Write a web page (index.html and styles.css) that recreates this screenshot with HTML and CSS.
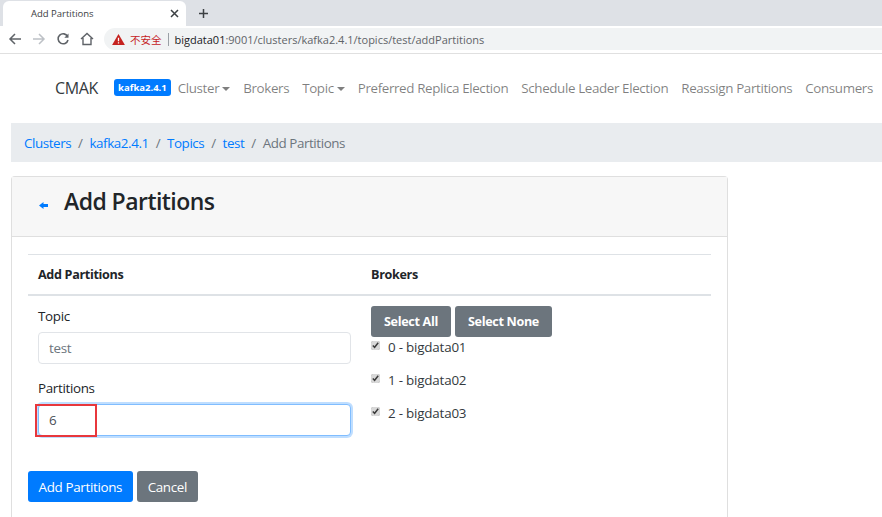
FILE: index.html
```html
<!DOCTYPE html>
<html lang="en">
<head>
    <meta charset="UTF-8">
    <meta name="viewport" content="width=device-width, initial-scale=1.0">
    <title>Add Partitions</title>
    <link rel="stylesheet" href="styles.css">
</head>
<body>
    <div class="tabstrip">
        <div class="tab">
            <span class="tab-title">Add Partitions</span>
            <svg class="tab-close" width="9" height="9" viewBox="0 0 9 9"><path d="M1 1l7 7M8 1l-7 7" stroke="#3c4043" stroke-width="1.5"/></svg>
        </div>
        <svg class="tab-new" width="11" height="11" viewBox="0 0 11 11"><path d="M5.5 1v9M1 5.5h9" stroke="#3c4043" stroke-width="1.5"/></svg>
    </div>
    <div class="toolbar">
        <svg class="tool" width="14" height="14" viewBox="0 0 14 14"><path d="M13 7H2M7 2L2 7l5 5" fill="none" stroke="#5f6368" stroke-width="1.5"/></svg>
        <svg class="tool" width="14" height="14" viewBox="0 0 14 14"><path d="M1 7h11M7 2l5 5-5 5" fill="none" stroke="#bdc1c6" stroke-width="1.5"/></svg>
        <svg class="tool" width="14" height="14" viewBox="0 0 14 14"><path d="M11.6 4.5A5 5 0 1 0 12 8" fill="none" stroke="#5f6368" stroke-width="1.6"/><path d="M12.5 1.5v4.2H8.3z" fill="#5f6368"/></svg>
        <svg class="tool" width="14" height="14" viewBox="0 0 14 14"><path d="M1 7l6-5.5L13 7M3 6v6.5h8V6" fill="none" stroke="#5f6368" stroke-width="1.4"/></svg>
        <div class="omnibox">
            <svg width="13" height="11" viewBox="0 0 14 12"><path d="M7 0l7 12H0z" fill="#c5221f"/><path d="M6.3 4h1.4v4H6.3zM6.3 9h1.4v1.4H6.3z" fill="#fff"/></svg>
            <span class="insecure">不安全</span>
            <span class="omni-sep"></span>
            <span class="url"><b>bigdata01</b>:9001/clusters/kafka2.4.1/topics/test/addPartitions</span>
        </div>
    </div>

    <nav class="navbar">
        <a class="brand">CMAK</a>
        <span class="badge">kafka2.4.1</span>
        <a class="nav-link caret">Cluster</a>
        <a class="nav-link">Brokers</a>
        <a class="nav-link caret">Topic</a>
        <a class="nav-link">Preferred Replica Election</a>
        <a class="nav-link">Schedule Leader Election</a>
        <a class="nav-link">Reassign Partitions</a>
        <a class="nav-link">Consumers</a>
    </nav>

    <ol class="breadcrumb">
        <li><a>Clusters</a></li>
        <li><a>kafka2.4.1</a></li>
        <li><a>Topics</a></li>
        <li><a>test</a></li>
        <li class="active">Add Partitions</li>
    </ol>

    <div class="card">
        <div class="card-header">
            <svg class="back" width="9" height="7" viewBox="0 0 9 7"><path d="M0 3.5L4.5 0v2H9v3H4.5v2z" fill="#007bff"/></svg>
            <h3>Add Partitions</h3>
        </div>
        <div class="card-body">
            <div class="grid">
                <div class="th">Add Partitions</div>
                <div class="th">Brokers</div>
                <div class="cell">
                    <label class="field-label">Topic</label>
                    <input class="form-control readonly" type="text" value="test" readonly>
                    <label class="field-label">Partitions</label>
                    <div class="marked">
                        <input class="form-control focused" type="text" value="6">
                        <span class="red-box"></span>
                    </div>
                </div>
                <div class="cell">
                    <div class="select-btns">
                        <button class="btn btn-gray strong">Select All</button>
                        <button class="btn btn-gray strong">Select None</button>
                    </div>
                    <label class="check first"><input type="checkbox" checked> 0 - bigdata01</label>
                    <label class="check"><input type="checkbox" checked> 1 - bigdata02</label>
                    <label class="check"><input type="checkbox" checked> 2 - bigdata03</label>
                </div>
            </div>
            <div class="actions">
                <button class="btn btn-blue">Add Partitions</button>
                <button class="btn btn-gray">Cancel</button>
            </div>
        </div>
    </div>
</body>
</html>
```

FILE: styles.css
```css
* {
    box-sizing: border-box;
}
html, body {
    height: 517px;
    overflow: hidden;
}
body {
    margin: 0;
    font-family: "Open Sans", "Noto Sans", Arial, sans-serif;
    font-size: 13.4px;
    letter-spacing: -0.33px;
    color: #212529;
    background: #fff;
}

/* browser chrome */
.tabstrip {
    height: 26px;
    background: #dee1e6;
    display: flex;
    align-items: center;
    padding-left: 3px;
}
.tab {
    width: 183px;
    height: 25px;
    margin-top: 1px;
    background: #fff;
    border-radius: 6px 6px 0 0;
    display: flex;
    align-items: center;
    justify-content: space-between;
    padding: 0 7px 0 28px;
}
.tab-title {
    font-size: 9.5px;
    letter-spacing: 0;
    color: #3c4043;
}
.tab-new {
    margin-left: 12px;
}
.toolbar {
    height: 28px;
    display: flex;
    align-items: center;
    padding: 0 0 1px 8px;
    gap: 10px;
    border-bottom: 1px solid #e0e0e0;
}
.omnibox {
    flex: 1;
    height: 22px;
    background: #f1f3f4;
    border-radius: 11px 0 0 11px;
    display: flex;
    align-items: center;
    padding-left: 8px;
}
.insecure {
    font-family: "Noto Sans CJK SC", sans-serif;
    font-size: 10.5px;
    letter-spacing: 0;
    color: #c5221f;
    margin-left: 5px;
}
.omni-sep {
    width: 1px;
    height: 13px;
    background: #9aa0a6;
    margin: 0 6px;
}
.url {
    font-size: 11px;
    letter-spacing: 0;
    color: #5f6368;
}
.url b {
    font-weight: 400;
    color: #202124;
}

/* navbar */
.navbar {
    height: 69px;
    display: flex;
    align-items: center;
    padding: 0 0 2px 55px;
    white-space: nowrap;
}
.brand {
    font-size: 16px;
    color: #343a40;
    margin-right: 16px;
}
.badge {
    background: #007bff;
    color: #fff;
    font-size: 9.5px;
    font-weight: 700;
    letter-spacing: 0;
    padding: 2px 4px;
    border-radius: 3px;
    margin-right: 7px;
}
.nav-link {
    color: rgba(0, 0, 0, 0.5);
    letter-spacing: -0.38px;
    margin-right: 13px;
}
.caret::after {
    content: "";
    display: inline-block;
    margin-left: 3px;
    vertical-align: 2px;
    border-top: 4px solid;
    border-left: 4px solid transparent;
    border-right: 4px solid transparent;
}

/* breadcrumb */
.breadcrumb {
    list-style: none;
    height: 39px;
    margin: 0 0 14px 11px;
    padding: 0 0 0 13px;
    background: #e9ecef;
    display: flex;
    align-items: center;
    letter-spacing: -0.42px;
}
.breadcrumb a {
    color: #007bff;
}
.breadcrumb li + li::before {
    content: "/";
    color: #6c757d;
    padding: 0 6.9px;
}
.breadcrumb .active {
    color: #6c757d;
}

/* card */
.card {
    width: 717px;
    height: 341px;
    margin-left: 11px;
    border: 1px solid #dfdfdf;
    border-bottom: 0;
    border-radius: 4px 4px 0 0;
}
.card-header {
    height: 60px;
    background: #f7f7f7;
    border-bottom: 1px solid #dfdfdf;
    display: flex;
    align-items: flex-start;
    padding: 9px 0 0 27px;
}
.back {
    margin: 16px 16px 0 0;
}
.card-header h3 {
    margin: 0;
    font-size: 23px;
    font-weight: 600;
    letter-spacing: -0.55px;
    line-height: 30px;
}
.card-body {
    padding: 17px 16px 0;
}
.grid {
    display: grid;
    grid-template-columns: 333px 1fr;
}
.th {
    height: 42px;
    border-top: 1px solid #dee2e6;
    border-bottom: 2px solid #dee2e6;
    padding: 11px 10px 0;
    font-weight: 700;
    font-size: 12.6px;
}
.cell {
    padding: 10px 10px 0;
}
.field-label {
    display: block;
    height: 20px;
    line-height: 20px;
    margin-bottom: 6px;
}
.form-control {
    display: block;
    width: 313px;
    height: 32px;
    margin-bottom: 14px;
    padding: 0 10px;
    font: inherit;
    letter-spacing: inherit;
    color: #495057;
    border: 1px solid #ced4da;
    border-radius: 4px;
    outline: none;
}
.readonly {
    color: #6c757d;
    border-color: #e1e4e8;
}
.focused {
    border-color: #80bdff;
    box-shadow: 0 0 0 2px rgba(0, 123, 255, 0.25);
}
.marked {
    position: relative;
}
.red-box {
    position: absolute;
    left: -3px;
    top: 0;
    width: 62px;
    height: 33px;
    border: 2px solid #e8373c;
}
.btn {
    height: 31px;
    padding: 0 10px;
    font: inherit;
    letter-spacing: inherit;
    color: #fff;
    border: 1px solid transparent;
    border-radius: 3px;
}
.btn-blue {
    background: #007bff;
    padding: 0 9.5px;
}
.btn-gray {
    background: #6c757d;
}
.strong {
    font-weight: 700;
    font-size: 12.6px;
    padding: 0 12px;
}
.select-btns {
    display: flex;
    gap: 4px;
}
.check {
    display: flex;
    align-items: center;
    height: 20px;
    margin-top: 13px;
    gap: 8px;
    letter-spacing: -0.2px;
    color: #343a40;
}
.check.first {
    margin-top: 0;
}
.check input {
    width: 9px;
    height: 9px;
    margin: 0 0 3px;
    accent-color: #d8d8d8;
}
.actions {
    display: flex;
    gap: 4px;
    margin-top: 21px;
}
```
